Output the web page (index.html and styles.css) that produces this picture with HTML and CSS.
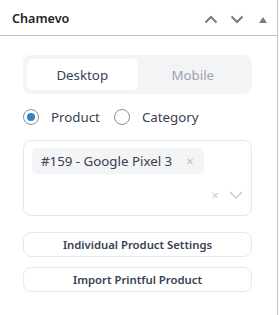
FILE: index.html
```html
<!DOCTYPE html>
<html lang="en">
<head>
<meta charset="UTF-8">
<meta name="viewport" content="width=device-width, initial-scale=1.0">
<title>Chamevo</title>
<link rel="stylesheet" href="styles.css">
</head>
<body>
<div class="panel">
    <div class="panel-head">
        <h2>Chamevo</h2>
        <div class="head-actions">
            <svg class="chev" width="14" height="9" viewBox="0 0 14 9"><path d="M1.5 7.5 L7 2 L12.5 7.5" fill="none" stroke="#787c82" stroke-width="2"/></svg>
            <svg class="chev" width="14" height="9" viewBox="0 0 14 9"><path d="M1.5 1.5 L7 7 L12.5 1.5" fill="none" stroke="#787c82" stroke-width="2"/></svg>
            <svg class="tri" width="8" height="6" viewBox="0 0 8 6"><path d="M4 0 L8 6 L0 6 Z" fill="#787c82"/></svg>
        </div>
    </div>

    <div class="panel-body">
        <div class="toggle">
            <div class="toggle-btn active">Desktop</div>
            <div class="toggle-btn">Mobile</div>
        </div>

        <div class="radios">
            <label class="radio"><span class="dot checked"></span>Product</label>
            <label class="radio"><span class="dot"></span>Category</label>
        </div>

        <div class="select">
            <div class="tags">
                <span class="tag">#159 - Google Pixel 3 <span class="tag-x">×</span></span>
            </div>
            <div class="select-ctrl">
                <span class="clear">×</span>
                <svg width="14" height="8" viewBox="0 0 14 8"><path d="M1 1 L7 7 L13 1" fill="none" stroke="#c8ced2" stroke-width="1.5"/></svg>
            </div>
        </div>

        <button class="btn">Individual Product Settings</button>
        <button class="btn">Import Printful Product</button>
    </div>
</div>
</body>
</html>
```

FILE: styles.css
```css
* {
    box-sizing: border-box;
}
body {
    margin: 0;
    background: #fff;
    font-family: "Noto Sans", "Open Sans", sans-serif;
    color: #1e1e1e;
}
.panel {
    width: 278px;
    height: 315px;
    border-right: 1px solid #c3c4c7;
}
.panel-head {
    height: 36px;
    border-bottom: 1px solid #c3c4c7;
    display: flex;
    align-items: center;
    justify-content: space-between;
    padding: 0 10px 0 12px;
}
.panel-head h2 {
    margin: 0;
    font-size: 12.6px;
    font-weight: 600;
    color: #1d2327;
    padding-top: 2px;
}
.head-actions {
    display: flex;
    align-items: center;
    gap: 12px;
    padding-top: 4px;
}
.tri {
    margin-left: 3px;
}
.panel-body {
    padding: 19px 25px 0 23px;
}
.toggle {
    display: flex;
    background: #f3f4f6;
    border-radius: 8px;
    padding: 4px;
    height: 39px;
}
.toggle-btn {
    flex: 1;
    display: flex;
    align-items: center;
    justify-content: center;
    font-size: 13.3px;
    color: #9ca3af;
    border-radius: 6px;
}
.toggle-btn.active {
    background: #fff;
    color: #374151;
}
.radios {
    display: flex;
    align-items: center;
    gap: 14px;
    height: 46px;
}
.radio {
    display: flex;
    align-items: center;
    gap: 12px;
    font-size: 13.3px;
    color: #374151;
}
.dot {
    width: 16px;
    height: 16px;
    border: 1px solid #8c8f94;
    border-radius: 50%;
    position: relative;
}
.dot.checked::after {
    content: "";
    position: absolute;
    left: 3px;
    top: 3px;
    width: 8px;
    height: 8px;
    border-radius: 50%;
    background: #3582c4;
}
.select {
    border: 1px solid #e5e7eb;
    border-radius: 8px;
    height: 76px;
    padding: 7px 8px 0 8px;
}
.tag {
    display: inline-flex;
    align-items: center;
    height: 26px;
    padding: 0 10px 0 9px;
    background: #f3f4f6;
    border-radius: 5px;
    font-size: 13.3px;
    color: #374151;
}
.tag-x {
    color: #b8bdc2;
    margin-left: 14px;
    font-size: 13px;
}
.select-ctrl {
    display: flex;
    justify-content: flex-end;
    align-items: center;
    gap: 10px;
    padding: 12px 0 0 0;
}
.clear {
    color: #c8ced2;
    font-size: 13px;
}
.btn {
    display: block;
    width: 100%;
    height: 25px;
    margin-top: 16px;
    background: #fff;
    border: 1px solid #e8e8e8;
    border-radius: 8px;
    font-family: inherit;
    font-size: 11.3px;
    font-weight: 600;
    color: #374151;
}
.btn + .btn {
    margin-top: 10px;
}
```
